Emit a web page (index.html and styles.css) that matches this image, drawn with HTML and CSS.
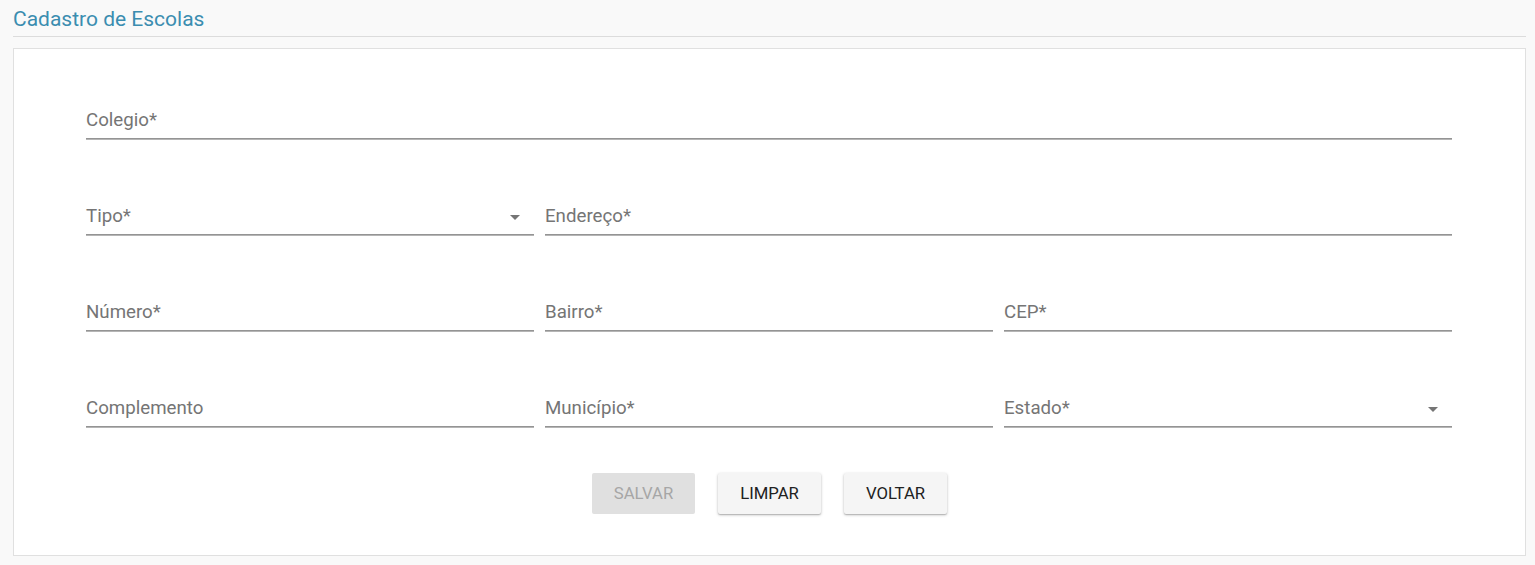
FILE: index.html
```html
<!DOCTYPE html>
<html lang="pt">
<head>
<meta charset="utf-8">
<title>Cadastro de Escolas</title>
<link rel="stylesheet" href="styles.css">
</head>
<body>
<div class="page">
  <h1 class="title">Cadastro de Escolas</h1>
  <form class="card">
    <div class="row">
      <div class="field span3"><span class="label">Colegio*</span></div>
    </div>
    <div class="row">
      <div class="field select"><span class="label">Tipo*</span><span class="arrow"></span></div>
      <div class="field span2"><span class="label">Endereço*</span></div>
    </div>
    <div class="row">
      <div class="field"><span class="label">Número*</span></div>
      <div class="field"><span class="label">Bairro*</span></div>
      <div class="field"><span class="label">CEP*</span></div>
    </div>
    <div class="row">
      <div class="field"><span class="label">Complemento</span></div>
      <div class="field"><span class="label">Município*</span></div>
      <div class="field select"><span class="label">Estado*</span><span class="arrow"></span></div>
    </div>
    <div class="actions">
      <button type="button" class="btn disabled">SALVAR</button>
      <button type="button" class="btn">LIMPAR</button>
      <button type="button" class="btn">VOLTAR</button>
    </div>
  </form>
</div>
</body>
</html>
```

FILE: styles.css
```css
* { box-sizing: border-box; }
html, body { margin: 0; padding: 0; }
body {
  background: #f9f9f9;
  font-family: Roboto, "Noto Sans", Arial, sans-serif;
  width: 1535px;
  height: 565px;
  overflow: hidden;
}
.page {
  padding: 6px 9px 0 13px;
}
.title {
  margin: 0;
  font-size: 21px;
  font-weight: 400;
  color: #3b8db0;
  line-height: 26px;
  height: 31px;
  border-bottom: 1px solid #dcdcdc;
}
.card {
  margin-top: 11px;
  background: #fff;
  border: 1px solid #e0e0e0;
  height: 508px;
  padding: 56px 72px 0 72px;
  display: flex;
  flex-direction: column;
}
.row {
  display: grid;
  grid-template-columns: repeat(3, 448px);
  column-gap: 11px;
  height: 96px;
  flex: none;
}
.field {
  height: 34px;
  border-bottom: 1px solid #949494;
  box-shadow: 0 1px 0 #b5b5b5;
  display: flex;
  align-items: flex-start;
  position: relative;
}
.span3 { grid-column: span 3; }
.span2 { grid-column: span 2; }
.label {
  font-size: 18.7px;
  color: #757575;
  line-height: 22px;
  padding-top: 4px;
}
.arrow {
  position: absolute;
  right: 14px;
  top: 14px;
  width: 0;
  height: 0;
  border-left: 5px solid transparent;
  border-right: 5px solid transparent;
  border-top: 5px solid #757575;
}
.actions {
  display: flex;
  justify-content: center;
  gap: 23px;
  margin-top: -16px;
}
.btn {
  width: 103px;
  height: 41px;
  border: none;
  border-radius: 2px;
  background: #f5f5f5;
  font-family: Roboto, "Noto Sans", Arial, sans-serif;
  font-size: 16.7px;
  font-weight: 400;
  color: #212121;
  box-shadow: 0 1px 3px rgba(0,0,0,0.25), 0 1px 1px rgba(0,0,0,0.14);
  padding: 0;
}
.btn.disabled {
  background: #e0e0e0;
  color: #a6a6a6;
  box-shadow: none;
}
```
